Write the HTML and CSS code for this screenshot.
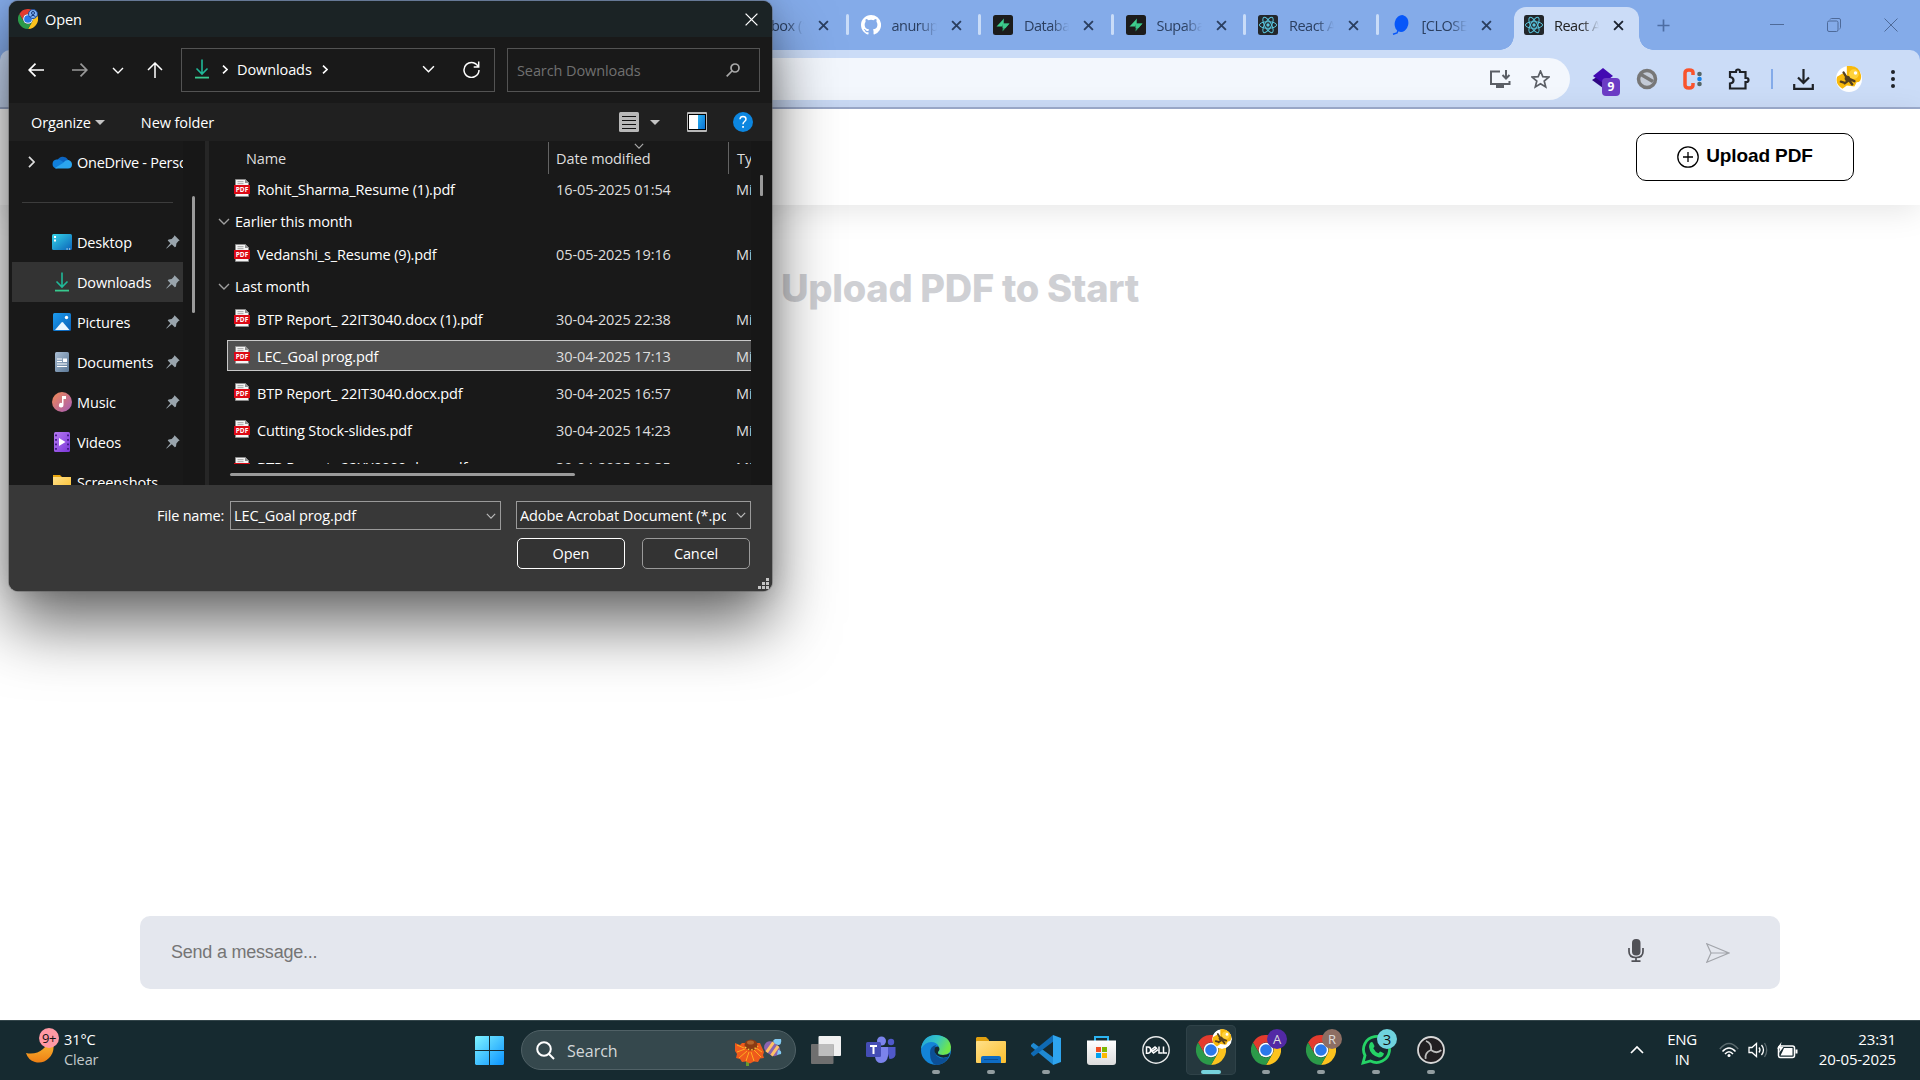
FILE: index.html
```html
<!DOCTYPE html>
<html lang="en">
<head>
<meta charset="utf-8">
<title>React App</title>
<link rel="stylesheet" href="styles.css">
</head>
<body>
<svg class="defs" width="0" height="0" aria-hidden="true">
  <defs>
    <linearGradient id="g-desk" x1="0" y1="0" x2="1" y2="1"><stop offset="0" stop-color="#36d6ea"/><stop offset="1" stop-color="#0b62b8"/></linearGradient>
    <linearGradient id="g-pic" x1="0" y1="0" x2="1" y2="1"><stop offset="0" stop-color="#1c9cf0"/><stop offset="1" stop-color="#0a5fb5"/></linearGradient>
    <linearGradient id="g-doc" x1="0" y1="0" x2="1" y2="1"><stop offset="0" stop-color="#a9bdd3"/><stop offset="1" stop-color="#5b7896"/></linearGradient>
    <linearGradient id="g-mus" x1="0" y1="0" x2="1" y2="1"><stop offset="0" stop-color="#f28a52"/><stop offset="1" stop-color="#a45bb8"/></linearGradient>
    <linearGradient id="g-vid" x1="0" y1="0" x2="1" y2="1"><stop offset="0" stop-color="#b77bf2"/><stop offset="1" stop-color="#7a35d8"/></linearGradient>
    <linearGradient id="g-win" x1="0" y1="0" x2="1" y2="1"><stop offset="0" stop-color="#7ff3ff"/><stop offset="1" stop-color="#0a93ff"/></linearGradient>
    <linearGradient id="g-moon" x1="0" y1="0" x2="0" y2="1"><stop offset="0" stop-color="#fbc53a"/><stop offset="1" stop-color="#ee7f14"/></linearGradient>
    <linearGradient id="g-edge" x1="0" y1="0" x2="1" y2=".4"><stop offset="0" stop-color="#1f9fdc"/><stop offset=".55" stop-color="#35c5c3"/><stop offset="1" stop-color="#6fe64a"/></linearGradient>
    <linearGradient id="g-fold" x1="0" y1="0" x2="1" y2="1"><stop offset="0" stop-color="#ffe08a"/><stop offset="1" stop-color="#fcbf2d"/></linearGradient>
    <linearGradient id="g-store" x1="0" y1="0" x2="0" y2="1"><stop offset="0" stop-color="#fff"/><stop offset="1" stop-color="#dcdcdc"/></linearGradient>
    <linearGradient id="g-pane" x1="0" y1="0" x2="1" y2="1"><stop offset="0" stop-color="#2cb3f2"/><stop offset="1" stop-color="#0a6fd0"/></linearGradient>
    <symbol id="chrome" viewBox="0 0 30 30">
      <path fill="#e33b2e" d="M2 7.5a15 15 0 0 1 26 0H15a7.500 7.500 0 0 0-6.500 11.200z"/>
      <path fill="#fcc31e" d="M28 7.500A15 15 0 0 1 15 30l6.500-11.200A7.500 7.500 0 0 0 15 7.500z"/>
      <path fill="#2b9a49" d="M15 30A15 15 0 0 1 2 7.500l6.500 11.250a7.500 7.500 0 0 0 13 0z"/>
      <circle cx="15" cy="15" r="7.300" fill="#fff"/><circle cx="15" cy="15" r="5.800" fill="#2a78ea"/>
    </symbol>
    <symbol id="bee" viewBox="0 0 24 24">
      <circle cx="12" cy="12" r="12" fill="#fff"/>
      <path fill="#f8b90c" d="M10 0q11-1 13 8 1 7-4 7l-2 4-7-1-4 3Q-1 17 1 10l5-3 4 2z"/>
      <circle cx="16.500" cy="7.500" r="4.500" fill="#ffd23c"/><circle cx="18" cy="6.500" r="1.600" fill="#fff"/>
      <path fill="none" stroke="#54401f" stroke-width="2.200" stroke-linecap="round" d="M7 6l3 5 7 3M8 16l4-3 3 4M4.500 14.500l3.500 1"/><circle cx="10.500" cy="11.500" r="2.500" fill="#54401f"/>
    </symbol>
    <symbol id="close" viewBox="0 0 10 10"><path d="M1 1l8 8M9 1L1 9" fill="none" stroke="currentColor" stroke-width="1.700"/></symbol>
    <symbol id="react" viewBox="0 0 20 20">
      <rect width="20" height="20" rx="2.500" fill="#23272b"/>
      <g fill="none" stroke="#58c4dc" stroke-width="1"><ellipse cx="10" cy="10" rx="8.600" ry="3.300"/><ellipse cx="10" cy="10" rx="8.600" ry="3.300" transform="rotate(60 10 10)"/><ellipse cx="10" cy="10" rx="8.600" ry="3.300" transform="rotate(120 10 10)"/></g>
      <circle cx="10" cy="10" r="1.700" fill="#58c4dc"/>
    </symbol>
    <symbol id="supa" viewBox="0 0 20 20"><rect width="20" height="20" rx="2.500" fill="#1c1c1c"/><path fill="#3ecf8e" d="M11 3.500L3.500 11.500h6z"/><path fill="#2fa872" d="M9.500 16.500L16.500 8.500h-6.500z"/><path fill="#3ecf8e" d="M11 3.500v5h5.500l-4 4.500H9.500v-1.500z" opacity=".8"/></symbol>
    <symbol id="pin" viewBox="0 0 14 14"><path fill="#9aa5ad" d="M8.500.3l5.200 5.200-1.200.6-2.100 2.300-.4 3.100-1.200.7-3-3L.7 13.600l-.5-.3 4.200-5L1.700 5.500l.9-1.100 3.100-.5 2.100-2.200z"/></symbol>
    <symbol id="pdf" viewBox="0 0 16 18">
      <path fill="#f4f4f4" stroke="#8d8d8d" stroke-width=".8" d="M1.500.5h10l3 3v14h-13z"/><path fill="#8d8d8d" d="M11 .5v3.500h3.500z"/>
      <path stroke="#999" stroke-width=".9" d="M3.500 2.700h6M3.500 4.700h6"/><rect y="6" width="16" height="9" fill="#dc0914"/>
      <text x="8" y="13.200" text-anchor="middle" class="pdf-text">PDF</text>
    </symbol>
    <symbol id="down" viewBox="0 0 14 20"><path fill="none" stroke="#20b898" stroke-width="1.600" d="M7 .5v14M1.500 9.500L7 15l5.500-5.500"/><path stroke="#38c98f" stroke-width="1.800" d="M0 18.600h14"/></symbol>
    <symbol id="chev" viewBox="0 0 12 7"><path d="M1 1l5 5 5-5" fill="none" stroke="currentColor" stroke-width="1.400"/></symbol>
    <symbol id="next" viewBox="0 0 6 9"><path d="M1 .7l4 3.800-4 3.800" fill="none" stroke="currentColor" stroke-width="1.600"/></symbol>
  </defs>
</svg>

<div class="browser">
  <div class="tabstrip">
    <div class="tab"><svg class="fav"></svg><span class="tab-title">Inbox (12)</span><svg class="tab-x"><use href="#close"/></svg></div>
    <div class="tab"><svg class="fav" viewBox="0 0 16 16"><path fill="#fff" d="M8 0C3.580 0 0 3.580 0 8c0 3.540 2.290 6.530 5.470 7.590.4.070.55-.17.55-.38v-1.490c-2.010.37-2.530-.49-2.690-.94-.09-.23-.48-.94-.82-1.130-.28-.15-.68-.52-.01-.53.63-.01 1.080.58 1.230.82.72 1.210 1.870.87 2.330.66.070-.52.28-.87.51-1.070-1.780-.2-3.640-.89-3.640-3.950 0-.87.31-1.590.82-2.150-.08-.2-.36-1.020.08-2.120 0 0 .67-.21 2.200.82a7.500 7.500 0 0 1 4 0c1.530-1.040 2.200-.82 2.200-.82.44 1.100.16 1.920.08 2.120.51.56.82 1.270.82 2.150 0 3.070-1.870 3.750-3.650 3.950.29.25.54.73.54 1.480v2.200c0 .21.15.46.55.38A8 8 0 0 0 8 0z"/></svg><span class="tab-title">anurup-b</span><svg class="tab-x"><use href="#close"/></svg></div>
    <div class="tab"><svg class="fav"><use href="#supa"/></svg><span class="tab-title">Database</span><svg class="tab-x"><use href="#close"/></svg></div>
    <div class="tab"><svg class="fav"><use href="#supa"/></svg><span class="tab-title">Supabase</span><svg class="tab-x"><use href="#close"/></svg></div>
    <div class="tab"><svg class="fav"><use href="#react"/></svg><span class="tab-title">React App</span><svg class="tab-x"><use href="#close"/></svg></div>
    <div class="tab no-sep"><svg class="fav" viewBox="0 0 20 20"><ellipse cx="10.500" cy="8.500" rx="6.800" ry="8.500" fill="#0757f9" transform="rotate(12 10.500 8.500)"/><path fill="none" stroke="#0757f9" stroke-width="1.500" d="M7 15.500l-1 2.500-4 1.200"/></svg><span class="tab-title">[CLOSED]</span><svg class="tab-x"><use href="#close"/></svg></div>
    <div class="tab active"><svg class="fav"><use href="#react"/></svg><span class="tab-title">React App</span><svg class="tab-x"><use href="#close"/></svg></div>
    <svg class="newtab" viewBox="0 0 14 14"><path d="M7 .5v13M.5 7h13" stroke="#4d6da3" stroke-width="1.800"/></svg>
    <div class="winctl">
      <svg width="14" height="14" viewBox="0 0 14 14"><path d="M0 6.500h14" stroke="#4e6a99" /></svg>
      <svg width="14" height="14" viewBox="0 0 14 14" fill="none" stroke="#4e6a99"><rect x=".5" y="3" width="10.500" height="10.500" rx="1.500"/><path d="M3 1.500q.5-1 1.500-1H12q1.500 0 1.500 1.500v7.500q0 1-1 1.500"/></svg>
      <svg width="14" height="14" viewBox="0 0 14 14"><path d="M.5.500l13 13M13.500.500l-13 13" stroke="#4e6a99"/></svg>
    </div>
  </div>
  <div class="toolbar">
    <div class="omnibox">
      <svg width="21" height="18" viewBox="0 0 21 18" fill="none" stroke="#5b5f66" stroke-width="2"><path d="M10 1.500H1v12.500h18.500v-3M16 0v8M12.500 5l3.500 3.500L19.500 5"/><path d="M6 16.500h8" stroke-width="3"/></svg>
      <svg width="19" height="19" viewBox="0 0 19 19"><path d="M9.500 1l2.300 5.600 6 .5-4.600 3.900 1.500 5.900-5.200-3.200-5.200 3.200L5.800 11 1.200 7.100l6-.5z" fill="none" stroke="#5b5f66" stroke-width="1.700"/></svg>
    </div>
    <div class="extensions">
      <div class="ext-badge"><svg width="22" height="22" viewBox="0 0 22 22"><path d="M0 12l11-7 11 7-11 8z" fill="#2e0783"/><path d="M11 0l10 8-10 7L1 8z" fill="#4209b2"/></svg><span class="count">9</span></div>
      <svg width="22" height="22" viewBox="0 0 22 22"><circle cx="11" cy="11" r="8.500" fill="#c3cad6" stroke="#777" stroke-width="3.500"/><path d="M5 6.500l12 7" stroke="#777" stroke-width="3.500"/></svg>
      <svg width="20" height="22" viewBox="0 0 20 22"><path d="M10 7V4.500Q10 2 6 2T2 5v12q0 3 4 3t4-3v-2" fill="none" stroke="#f9532c" stroke-width="3.500"/><circle cx="16.500" cy="6" r="2.300" fill="#566"/><circle cx="16.500" cy="11" r="2.300" fill="#1683ea"/><circle cx="16.500" cy="16" r="2.300" fill="#566"/></svg>
      <svg width="22" height="22" viewBox="0 0 22 22"><path d="M2 4h6V3.500a2 2 0 0 1 4 0V4h5.500v6h1a2 2 0 0 1 0 4h-1v6.500H2v-5q3.500-.5 3.500-3.200T2 9z" fill="none" stroke="#1f2227" stroke-width="2.200"/></svg>
      <i class="divider"></i>
      <svg width="21" height="21" viewBox="0 0 21 21" fill="none" stroke="#1f2227" stroke-width="2.200"><path d="M10.500 0v13.500M5 8.500l5.500 5.500L16 8.500M1.200 15v4.800h18.600V15"/></svg>
      <svg width="26" height="26"><use href="#bee"/></svg>
      <svg width="4" height="20" viewBox="0 0 4 20" fill="#1f2227"><circle cx="2" cy="3" r="2"/><circle cx="2" cy="10" r="2"/><circle cx="2" cy="17" r="2"/></svg>
    </div>
  </div>
  <div class="page">
    <header class="page-head">
      <button class="upload"><svg width="22" height="22" viewBox="0 0 22 22" fill="none" stroke="#000" stroke-width="1.300"><circle cx="11" cy="11" r="10.200"/><path d="M11 6v10M6 11h10"/></svg><span>Upload PDF</span></button>
    </header>
    <h1 class="hero">Upload PDF to Start</h1>
    <div class="composer">
      <span class="placeholder">Send a message...</span>
      <svg width="18" height="24" viewBox="0 0 18 24"><rect x="5" y="0" width="8.500" height="16.500" rx="4" fill="#505157"/><path d="M2 9v3.500q0 6 7 6t7-6V9M9 18v4M4.500 22.200h9" fill="none" stroke="#505157" stroke-width="1.700"/></svg>
      <svg width="24" height="20" viewBox="0 0 24 20" fill="none" stroke="#a2a5ab" stroke-width="1.200"><path d="M.8.800L23 10 .8 19.200 5 10zM5 10h18"/></svg>
    </div>
  </div>
</div>

<section class="dialog">
  <div class="d-title">
    <div class="d-logo"><svg width="20" height="20"><use href="#chrome"/></svg><svg class="d-ava" width="10" height="10" viewBox="0 0 10 10"><circle cx="5" cy="5" r="4.500" fill="#7fb0f3" stroke="#1d4a96"/><circle cx="5" cy="4" r="1.500" fill="none" stroke="#14377a"/><path d="M2.500 7.500q2.500-2.500 5 0" fill="none" stroke="#14377a"/></svg></div>
    <span>Open</span>
    <svg class="d-close" width="13" height="13" viewBox="0 0 13 13"><path d="M.6.600l11.800 11.800M12.400.600L.6 12.400" stroke="#fff" stroke-width="1.300"/></svg>
  </div>
  <div class="d-nav">
    <svg width="16" height="14" viewBox="0 0 16 14" fill="none" stroke="#fff" stroke-width="1.700"><path d="M16 7H1M7.500 .7L1.200 7l6.300 6.300"/></svg>
    <svg width="16" height="14" viewBox="0 0 16 14" fill="none" stroke="#999" stroke-width="1.700"><path d="M0 7h15M8.500 .7L14.800 7l-6.300 6.300"/></svg>
    <svg class="w" width="12" height="7"><use href="#chev"/></svg>
    <svg width="16" height="16" viewBox="0 0 16 16" fill="none" stroke="#fff" stroke-width="1.500"><path d="M8 16V1M1 8l7-7 7 7"/></svg>
    <div class="address">
      <svg width="14" height="20"><use href="#down"/></svg><svg class="w c1" width="6" height="9"><use href="#next"/></svg><span>Downloads</span><svg class="w c2" width="6" height="9"><use href="#next"/></svg>
      <svg class="w drop" width="13" height="8"><use href="#chev"/></svg>
      <svg width="17" height="17" viewBox="0 0 17 17" fill="none" stroke="#fff" stroke-width="1.500"><path d="M15.600 6.500A7.500 7.500 0 1 0 16 9M15.700 .5v5.500h-5"/></svg>
    </div>
    <div class="d-search"><span>Search Downloads</span><svg width="14" height="14" viewBox="0 0 14 14" fill="none" stroke="#a8a8a8" stroke-width="1.700"><circle cx="9" cy="5" r="4"/><path d="M6 8L.7 13.300"/></svg></div>
  </div>
  <div class="d-tools">
    <span class="organize">Organize</span><i class="tri t1"></i><span class="newfolder">New folder</span>
    <svg class="ic-list" width="20" height="20" viewBox="0 0 20 20"><rect width="20" height="20" rx="1.500" fill="#b8b8b8"/><path d="M3 4.500h14M3 8.500h14M3 12.500h14M3 16.500h14" stroke="#111"/></svg>
    <i class="tri t2"></i>
    <svg class="ic-pane" width="20" height="20" viewBox="0 0 20 20"><rect width="20" height="20" rx="1" fill="#b8b8b8"/><rect x="1" y="2" width="18" height="16" fill="#000"/><rect x="2" y="3" width="9" height="14" fill="#fff"/><rect x="11" y="3" width="7" height="14" fill="url(#g-pane)"/></svg>
    <svg class="ic-help" width="20" height="20" viewBox="0 0 20 20"><circle cx="10" cy="10" r="10" fill="#0c86e0"/><path d="M7 7.200Q7.200 4.500 10 4.500t3 2.500q0 1.500-1.500 2.500T10 12.300" fill="none" stroke="#fff" stroke-width="1.500"/><rect x="9.200" y="14" width="1.700" height="1.800" fill="#fff"/></svg>
  </div>
  <div class="d-body">
    <nav class="side">
      <div class="s-row one"><svg class="w s-arrow" width="7" height="12" viewBox="0 0 7 12"><path d="M1 .8L6 6l-5 5.200" fill="none" stroke="#ddd" stroke-width="1.700"/></svg><svg class="s-ic" viewBox="0 0 20 20"><path fill="#0c65c2" d="M5.500 8A6 6 0 0 1 16 7.500l-4 6z"/><path fill="#1080dc" d="M4.500 7.500Q7 7 9 8.500l7 5-12 3a4.600 4.600 0 0 1 .5-9z"/><path fill="#2ba5ee" d="M3 16l8-5q2.500-3.500 5.500-3 3.500 1 3.500 4.500 0 4-4 4H5q-1.500 0-2-.5z"/></svg><span>OneDrive - Personal</span></div>
      <hr>
      <div class="s-row"><svg class="s-ic" viewBox="0 0 20 20"><rect y="2" width="20" height="16" rx="1.500" fill="url(#g-desk)"/><path fill="#fff" d="M2 4h2v2H2zM2 7.500h2v2H2zM14.500 16.500h1.200v1h-1.200zM17 16.500h1.200v1H17z"/></svg><span>Desktop</span><svg class="s-pin"><use href="#pin"/></svg></div>
      <div class="s-row sel"><svg class="s-ic"><use href="#down"/></svg><span>Downloads</span><svg class="s-pin"><use href="#pin"/></svg></div>
      <div class="s-row"><svg class="s-ic" viewBox="0 0 20 20"><rect x="1" y="1" width="18" height="18" rx="1.500" fill="url(#g-pic)"/><path fill="#eaf6ff" d="M3 18l6.500-7.500q.8-.8 1.600 0L17.500 18z"/><circle cx="14.500" cy="5.500" r="1.700" fill="#fff"/></svg><span>Pictures</span><svg class="s-pin"><use href="#pin"/></svg></div>
      <div class="s-row"><svg class="s-ic" viewBox="0 0 20 20"><rect x="3" width="14" height="20" rx="1.500" fill="url(#g-doc)"/><path stroke="#fff" stroke-width="1.200" d="M5 7h5M5 9.500h5M5 12h10M5 14.500h10"/><rect x="11" y="6.500" width="4" height="3.500" fill="#fff"/></svg><span>Documents</span><svg class="s-pin"><use href="#pin"/></svg></div>
      <div class="s-row"><svg class="s-ic" viewBox="0 0 20 20"><circle cx="10" cy="10" r="10" fill="url(#g-mus)"/><path fill="#fff" d="M10 4h4v3h-2.500v6a2.300 2.300 0 1 1-1.500-2z"/></svg><span>Music</span><svg class="s-pin"><use href="#pin"/></svg></div>
      <div class="s-row"><svg class="s-ic" viewBox="0 0 20 20"><rect x="2" width="16" height="20" rx="1.500" fill="url(#g-vid)"/><path stroke="#3d1583" stroke-width="1.800" stroke-dasharray="1.800 2.700" d="M4 2.500v16M16 2.500v16"/><path fill="#fff" d="M7 6l6.500 4L7 14z"/></svg><span>Videos</span><svg class="s-pin"><use href="#pin"/></svg></div>
      <div class="s-row"><svg class="s-ic" viewBox="0 0 20 20"><path fill="#e9a50e" d="M1 3h7l2 2v5H1z"/><rect x="1" y="5" width="18" height="14" fill="url(#g-fold)"/></svg><span>Screenshots</span></div>
    </nav>
    <div class="side-scroll"><i></i></div>
    <div class="files">
      <div class="f-head"><span class="c-name">Name</span><span class="c-date">Date modified<svg class="sort" width="10" height="6"><use href="#chev"/></svg></span><span class="c-type">Ty</span></div>
      <div class="f-list">
        <div class="f-row"><svg class="pdf"><use href="#pdf"/></svg><b>Rohit_Sharma_Resume (1).pdf</b><span>16-05-2025 01:54</span><em>Mi</em></div>
        <div class="f-group"><svg width="12" height="7"><use href="#chev"/></svg>Earlier this month</div>
        <div class="f-row"><svg class="pdf"><use href="#pdf"/></svg><b>Vedanshi_s_Resume (9).pdf</b><span>05-05-2025 19:16</span><em>Mi</em></div>
        <div class="f-group"><svg width="12" height="7"><use href="#chev"/></svg>Last month</div>
        <div class="f-row"><svg class="pdf"><use href="#pdf"/></svg><b>BTP Report_ 22IT3040.docx (1).pdf</b><span>30-04-2025 22:38</span><em>Mi</em></div>
        <div class="f-row picked"><svg class="pdf"><use href="#pdf"/></svg><b>LEC_Goal prog.pdf</b><span>30-04-2025 17:13</span><em>Mi</em></div>
        <div class="f-row"><svg class="pdf"><use href="#pdf"/></svg><b>BTP Report_ 22IT3040.docx.pdf</b><span>30-04-2025 16:57</span><em>Mi</em></div>
        <div class="f-row"><svg class="pdf"><use href="#pdf"/></svg><b>Cutting Stock-slides.pdf</b><span>30-04-2025 14:23</span><em>Mi</em></div>
        <div class="f-row"><svg class="pdf"><use href="#pdf"/></svg><b>BTP Report_ 22XX0000.docx.pdf</b><span>30-04-2025 08:35</span><em>Mi</em></div>
      </div>
      <div class="h-scroll"><i></i></div>
    </div>
    <div class="v-scroll"><i></i></div>
  </div>
  <div class="d-foot">
    <div class="foot-row">
      <label>File name:</label>
      <div class="combo fname"><span>LEC_Goal prog.pdf</span><svg width="10" height="6"><use href="#chev"/></svg></div>
      <div class="combo ftype"><span>Adobe Acrobat Document (*.pdf)</span><svg width="10" height="6"><use href="#chev"/></svg></div>
    </div>
    <div class="foot-btns"><div class="btn primary">Open</div><div class="btn">Cancel</div></div>
    <svg class="grip" width="11" height="11" viewBox="0 0 11 11" fill="#c4c4c4"><path d="M8 0h3v3H8zM4 4h3v3H4zM8 4h3v3H8zM0 8h3v3H0zM4 8h3v3H4zM8 8h3v3H8z"/></svg>
  </div>
</section>

<footer class="taskbar">
  <div class="weather">
    <div class="moon"><svg width="28" height="28" viewBox="0 0 28 28"><path fill="url(#g-moon)" d="M25 2Q31 15 23 23q-6 6-14 4-7-2-9-9 10 2 17-4 6-5 8-12z"/></svg><span>9+</span></div>
    <div class="w-text"><span>31°C</span><span class="dim">Clear</span></div>
  </div>
  <div class="apps">
    <div class="app"><svg width="29" height="29" viewBox="0 0 29 29"><path fill="url(#g-win)" d="M1 0h13v14H0V1zM15 0h13l1 1v13H15zM0 15h14v14H1l-1-1zM15 15h14v13l-1 1H15z"/></svg></div>
    <div class="t-search"><svg width="19" height="19" viewBox="0 0 19 19" fill="none" stroke="#fff" stroke-width="2"><circle cx="8" cy="8" r="6.800"/><path d="M13 13l5 5"/></svg><span>Search</span>
      <svg class="flower" width="48" height="28" viewBox="0 0 48 28"><path d="M13.500 20v7" stroke="#6a9a2c" stroke-width="3"/><path fill="#ee5a1c" d="M1 4l5 2 2-2h18l4 9-1 3 1 3-4 .5-2 3.500-4-.5-4 2-4-2-4 .5-2-3-4-1 1-4-2-3z"/><path stroke="#ffac1f" stroke-width="1" fill="none" d="M3 6l7 3M3 13l8-3M5 19l8-7M12 22l3-9M20 22l-3-9M27 18l-7-7M28 13l-6-4"/><ellipse cx="17" cy="6" rx="6.500" ry="5.500" fill="#8a3b14"/><ellipse cx="16.500" cy="3.500" rx="3.500" ry="2" fill="#b5652c"/><path stroke="#f6c53c" stroke-width="1.500" stroke-dasharray="1.500 2" fill="none" d="M11 8q6 6 13-1"/><g transform="rotate(35 38 9)"><rect x="30" y="3.500" width="17" height="12" rx="6" fill="#8b64b0"/><path stroke="#ffc267" stroke-width="3" d="M36 3.500v12M42 4v11.500"/></g><path fill="#84cbf3" d="M39 2q3-4 8-2 1 5-2 6-4 0-6-4zM44 11q4 0 3 4l-4 1z"/></svg></div>
    <div class="app"><svg width="30" height="28" viewBox="0 0 30 28"><rect x="7.500" width="22.500" height="20" rx="1" fill="#f1f1f1"/><rect y="8" width="22.500" height="20" rx="1" fill="#6f6f6f"/><rect x="7.500" y="8" width="15" height="12" fill="#bdbdbd"/></svg></div>
    <div class="app"><svg width="30" height="28" viewBox="0 0 30 28"><circle cx="15.500" cy="5" r="4.500" fill="#7b83eb"/><circle cx="25" cy="6" r="3.200" fill="#5059c9"/><path fill="#5059c9" d="M20 11h9.500v8q-1 4-6 4z"/><path fill="#7b83eb" d="M9 11h13v9q-1 7-7 7-5 0-6-6z"/><rect y="6" width="15" height="15" rx="1.500" fill="#444db5"/><path stroke="#fff" stroke-width="2" d="M4 10h7M7.500 10v8"/></svg></div>
    <div class="app run"><svg width="30" height="30" viewBox="0 0 30 30"><circle cx="15" cy="15" r="15" fill="#1384d8"/><path fill="#0c4f96" d="M9 18q0-7 6-8-4 9 4 13 5 1 9-2-4 9-13 9-6-2-6-12z"/><path fill="url(#g-edge)" d="M0 14Q2 0 15 0q14 1 15 12 0 8-8 8-6 0-5-3 2-2 1-5-2-5-8-5-6 0-10 7z"/><path fill="#16292f" d="M14 12.500q3-2 4.300.5.700 2.500-1.300 4-1 3 5 3 4 0 7-2l-1.500 3.500Q22 24 17 21q-5-3-3-8.500z"/></svg></div>
    <div class="app run"><svg width="30" height="28" viewBox="0 0 30 28"><path fill="#e0a010" d="M0 2l1-1h9l3 3v6H0z"/><rect y="5" width="30" height="22" rx="1" fill="url(#g-fold)"/><path fill="#0e6cc4" d="M5 27v-5q0-2 2-2h16q2 0 2 2v5z"/><path stroke="#0a4f98" d="M8 23.500h14"/></svg></div>
    <div class="app run"><svg width="30" height="30" viewBox="0 0 30 30"><path fill="#1f8ad2" d="M0 10l2.500-2.200L23 23l-1 6.800L0 11.500z"/><path fill="#0f6ab4" d="M0 19l2.500 2.500L23 6l-1-6L0 18z"/><path fill="#2ea4ee" d="M22 0l8 3v24l-8 3z"/></svg></div>
    <div class="app"><svg width="29" height="29" viewBox="0 0 29 29"><path fill="none" stroke="#2cb5f2" stroke-width="2" d="M8 6V1h13v5"/><path fill="url(#g-store)" d="M0 4.500h29V26q0 3-3 3H3q-3 0-3-3z"/><path fill="#f04f23" d="M9 11h5v5H9z"/><path fill="#7db700" d="M15 11h5v5h-5z"/><path fill="#00a1ee" d="M9 17h5v5H9z"/><path fill="#fcb900" d="M15 17h5v5h-5z"/></svg></div>
    <div class="app"><svg width="28" height="28" viewBox="0 0 28 28"><circle cx="14" cy="14" r="13.200" fill="#172a30" stroke="#e8eaea" stroke-width="1.400"/><path fill="none" stroke="#fff" stroke-width="1.500" d="M4.500 11v6.300h1.700q2.500-.2 2.500-3.200T6.200 11zM9 14l4-3 1.500 1.200-4 3zM10 15.500l1.500 1.500 4.500-3.300M17 10.500v6.500h3.500M21.500 10.500v6.500H25"/></svg></div>
    <div class="app current"><svg width="30" height="30"><use href="#chrome"/></svg><svg class="ava" width="20" height="20"><use href="#bee"/></svg></div>
    <div class="app run"><svg width="30" height="30"><use href="#chrome"/></svg><span class="ava a">A</span></div>
    <div class="app run"><svg width="30" height="30"><use href="#chrome"/></svg><span class="ava r">R</span></div>
    <div class="app run"><svg width="30" height="30" viewBox="0 0 30 30"><path fill="none" stroke="#25d366" stroke-width="2.800" d="M2 28l2-7.500A13 13 0 1 1 9.500 26z"/><path fill="#25d366" d="M9 8q2-2 3 0l1.500 3q0 1-1.200 2.300 2 4 5.200 5l1.500-1.800q1 0 4 2-1 4-5 4Q9 20 8 12q0-2 1-4z"/></svg><span class="ava w3">3</span></div>
    <div class="app run"><svg width="28" height="28" viewBox="0 0 28 28"><circle cx="14" cy="14" r="13" fill="#211e21" stroke="#d7d7d7" stroke-width="1.800"/><g fill="none" stroke="#bdbdbd" stroke-width="1.800"><path d="M14 14q1-7-5-9"/><path d="M14 14q1-7-5-9" transform="rotate(120 14 14)"/><path d="M14 14q1-7-5-9" transform="rotate(240 14 14)"/></g></svg></div>
  </div>
  <div class="tray">
    <svg class="tray-up" width="14" height="9" viewBox="0 0 14 9"><path d="M1 8l6-6 6 6" fill="none" stroke="#fff" stroke-width="1.700"/></svg>
    <div class="lang"><span>ENG</span><span>IN</span></div>
    <svg width="20" height="16" viewBox="0 0 20 16" fill="none" stroke="#fff" stroke-width="1.500"><path d="M.8 7Q10-4 19.200 7" stroke="#5a696d"/><path d="M3.500 9.500q6.500-7 13 0M6 12q4-4.500 8 0"/><circle cx="10" cy="13.500" r="1.500" fill="#fff" stroke="none"/></svg>
    <svg width="20" height="16" viewBox="0 0 20 16" fill="none" stroke="#fff" stroke-width="1.300"><path d="M1 5.500h3L8.500 1.500v13L4 10.500H1zM11 5.500q2 2.500 0 5M13.500 3q4 5 0 10"/><path d="M16.500 1q4.500 7 0 14" stroke="#5a696d"/></svg>
    <svg width="21" height="17" viewBox="0 0 21 17"><rect x="1.500" y="4" width="16" height="11.500" rx="2" fill="none" stroke="#fff" stroke-width="1.500"/><path fill="#fff" d="M7 6h8.500v7.500h-12l2-4zM18.500 7.500h2v4h-2zM4.500 0L0 6.500h3L2 11l4.500-6h-3z"/></svg>
    <div class="clock"><span>23:31</span><span>20-05-2025</span></div>
  </div>
</footer>
</body>
</html>
```
FILE: styles.css
```css
* { box-sizing: border-box; }
html, body { margin: 0; height: 100%; }
body {
  width: 1920px; height: 1080px; overflow: hidden; display: flex; flex-direction: column;
  font-family: "Open Sans", "Noto Sans", sans-serif; font-size: 14px; background: #fff;
}
svg { display: block; flex: none; }
.defs { position: absolute; }
.w { color: #fff; }

/* browser window */
.browser { flex: 1; display: flex; flex-direction: column; min-height: 0; background: #84abe9; }
.tabstrip { height: 50px; background: #84abe9; display: flex; align-items: center; padding-left: 715px; position: relative; }
.tab { width: 132.500px; height: 50px; display: flex; align-items: center; padding-left: 13px; position: relative; color: #2b3f60; font-size: 14.500px; }
.tab::after { content: ""; position: absolute; right: -1px; top: 14px; width: 3px; height: 21px; border-radius: 2px; background: #c9dcf8; }
.tab.no-sep::after { display: none; }
.fav { width: 20px; height: 20px; }
.tab-title { width: 46px; margin-left: 11px; overflow: hidden; white-space: nowrap; letter-spacing: -.5px; -webkit-mask-image: linear-gradient(90deg, #000 60%, transparent 98%); }
.tab-x { width: 11px; height: 11px; margin-left: 13px; color: #2b3f60; }
.tab.active { width: 124.500px; margin-left: 4px; padding-left: 10px; height: 43px; margin-top: 7px; padding-bottom: 7px; background: #cbdcf7; border-radius: 12px 12px 0 0; color: #222; }
.tab.active .tab-title { margin-left: 10px; }
.tab.active::before, .tab.active::after { content: ""; position: absolute; top: auto; right: auto; bottom: 0; width: 14px; height: 14px; border-radius: 0; }
.tab.active::before { left: -14px; background: radial-gradient(circle at 0 0, transparent 13.500px, #cbdcf7 14px); }
.tab.active::after { left: 100%; background: radial-gradient(circle at 100% 0, transparent 13.500px, #cbdcf7 14px); }
.tab.active .tab-x { color: #1d2430; }
.newtab { width: 13px; height: 13px; margin-left: 18px; }
.winctl { margin-left: auto; display: flex; gap: 43px; padding-right: 22px; }
.toolbar { height: 59px; background: #cbdcf7; border-bottom: 2px solid #9daccd; border-radius: 10px 10px 0 0; display: flex; align-items: center; }
.omnibox { width: 1532px; height: 42px; margin-left: 38px; margin-top: 1px; border-radius: 21px; background: #f3f7fd; display: flex; align-items: center; justify-content: flex-end; gap: 20px; padding-right: 20px; }
.extensions { display: flex; align-items: center; flex: 1; padding-left: 22px; margin-top: 1px; }
.ext-badge { position: relative; width: 28px; margin-right: 16px; margin-top: -1px; }
.count { position: absolute; left: 10px; top: 10px; width: 18px; height: 18px; border-radius: 4px; background: #6b3cc4; color: #fff; font-weight: 700; font-size: 12px; line-height: 18px; text-align: center; }
.extensions > svg:nth-child(3) { margin-left: 25px; }
.extensions > svg:nth-child(4) { margin-left: 25px; }
.divider { width: 2px; height: 20px; background: #84abe9; margin: 0 20px 0 21px; }
.extensions > svg:nth-child(7) { margin-left: 22px; }
.extensions > svg:nth-child(8) { margin-left: 29px; }

/* page */
.page { flex: 1; display: flex; flex-direction: column; background: #fff; }
.page-head { height: 96px; display: flex; justify-content: flex-end; align-items: center; padding-right: 66px; box-shadow: 0 6px 30px rgba(0,0,0,.1); }
.upload { width: 218px; height: 48px; border: 1.500px solid #000; border-radius: 10px; background: #fff; padding: 0 0 2px; display: flex; align-items: center; justify-content: center; gap: 7px; font: 700 19px "Liberation Sans", Arial, sans-serif; letter-spacing: -.1px; color: #000; }
.upload svg { position: relative; top: 1px; }
.hero { margin: 59px 0 0; text-align: center; font: 800 38px/48px Inter, sans-serif; color: #cfd0d4; letter-spacing: -.3px; }
.composer { margin: auto 140px 31px; height: 73px; border-radius: 10px; background: #e4e7ee; display: flex; align-items: center; padding: 0 50px 0 31px; font: 18px "Liberation Sans", Arial, sans-serif; letter-spacing: -.22px; color: #757575; }
.placeholder { flex: 1; }
.composer svg:nth-child(2) { margin-right: 61px; margin-top: -3px; }

/* file dialog, floating over the browser */
.dialog { position: absolute; left: 9px; top: 1px; width: 763px; height: 590px; border-radius: 9px; background: #191919; color: #fff; display: flex; flex-direction: column; box-shadow: 0 0 0 1px rgba(90,90,90,.45), 0 0 24px rgba(0,0,0,.15), 0 34px 64px rgba(0,0,0,.58); font-size: 14.500px; letter-spacing: -.1px; white-space: nowrap; clip-path: inset(-1px -100px -150px -9px); }
.d-title { height: 36px; background: #1b2325; border-radius: 9px 9px 0 0; display: flex; align-items: center; padding: 0 14px 0 9px; gap: 7px; }
.d-logo { position: relative; }
.d-ava { position: absolute; right: 0; top: 0; }
.d-close { margin-left: auto; }
.d-nav { height: 66px; display: flex; align-items: center; padding: 0 0 0 19px; }
.d-nav > svg:nth-child(2) { margin-left: 28px; }
.d-nav > svg:nth-child(3) { margin-left: 24px; }
.d-nav > svg:nth-child(4) { margin-left: 23px; }
.address { margin-left: 18px; width: 314px; height: 44px; border: 1px solid #535353; display: flex; align-items: center; padding: 0 14px 2px 13px; }
.c1 { margin: 0 9px 0 13px; }
.c2 { margin-left: 10px; }
.drop { margin-left: auto; margin-right: 28px; }
.d-search { margin-left: 12px; width: 253px; height: 44px; border: 1px solid #535353; display: flex; align-items: center; justify-content: space-between; padding: 0 19px 0 9px; color: #707070; }
.d-tools { height: 38px; background: #202020; display: flex; align-items: center; padding: 0 19px 0 22px; }
.tri { border: 5px solid transparent; border-top-color: #c4c4c4; border-bottom: 0; }
.t1 { margin: 0 36px 0 4px; }
.ic-list { margin-left: auto; }
.t2 { margin: 0 27px 0 11px; }
.ic-help { margin-left: 26px; }
.d-body { height: 344px; display: flex; overflow: hidden; }
.side { width: 171px; margin-left: 3px; overflow: hidden; }
.s-row { height: 40px; display: flex; align-items: center; padding-left: 40px; position: relative; }
.s-row span { margin-left: 5px; flex: 1; overflow: hidden; letter-spacing: -.15px; }
.s-ic { width: 20px; height: 20px; }
.s-pin { width: 14px; height: 14px; margin-right: 3px; }
.s-row.one { padding-left: 16px; margin-top: 1px; }
.s-row.one span { letter-spacing: -.25px; }
.s-arrow { margin-right: 17px; }
.s-row.sel { background: #333; }
.side hr { margin: 20px 10px 19px; border: 0; border-top: 1px solid #3c3c3c; }
.side-scroll { width: 22px; padding: 55px 0 0 9px; background: #171717; }
.side-scroll i { display: block; width: 3px; height: 117px; background: #9a9a9a; border-radius: 2px; }
.files { width: 546px; border-left: 4px solid #262626; display: flex; flex-direction: column; overflow: hidden; }
.f-head { height: 32px; display: flex; align-items: center; color: #dedede; flex: none; }
.c-name { width: 339px; padding: 2px 0 0 37px; }
.c-date, .c-type { height: 32px; border-left: 1px solid #636363; padding: 7px 0 0 7px; line-height: 20px; position: relative; margin-top: 1px; }
.c-date { width: 180px; }
.sort { position: absolute; left: 85px; top: 1px; color: #aaa; }
.c-type { flex: 1; overflow: hidden; padding-left: 8px; }
.f-list { height: 291px; overflow: hidden; }
.f-list > :first-child { margin-top: -2px; }
.f-row { height: 37px; display: flex; align-items: center; padding: 0 0 0 25px; }
.f-row > * { flex: none; }
.f-row b { font-weight: 400; width: 299px; margin-left: 7px; letter-spacing: -.15px; }
.f-row span { width: 180px; color: #dedede; }
.f-row em { font-style: normal; color: #dedede; }
.f-row.picked { height: 31px; margin: 2px 0 4px 18px; padding: 2px 0 0 6px; border: 1px solid #c8c8c8; border-right: 0; background: #505050; }
.f-group { height: 28px; display: flex; align-items: center; padding: 0 0 2px 9px; gap: 5px; letter-spacing: -.2px; }
.f-group svg { color: #a0a0a0; }
.pdf { width: 16px; height: 18px; margin-top: -3px; }
.pdf-text { font: 700 6.500px "Open Sans", sans-serif; fill: #fff; letter-spacing: 0; }
.h-scroll { flex: 1; padding: 9px 0 0 21px; }
.h-scroll i { display: block; width: 345px; height: 3px; border-radius: 2px; background: #9a9a9a; }
.v-scroll { flex: 1; background: #171717; padding: 34px 0 0 9px; }
.v-scroll i { display: block; width: 3px; height: 21px; background: #9a9a9a; border-radius: 1px; }
.d-foot { flex: 1; background: #383838; border-radius: 0 0 9px 9px; padding-top: 16px; position: relative; }
.foot-row { display: flex; height: 29px; align-items: flex-start; line-height: 27px; }
.foot-row label { width: 215px; text-align: right; margin-right: 6px; padding-top: 1px; letter-spacing: -.2px; }
.combo { height: 29px; border: 1px solid #9a9a9a; background: #333; display: flex; align-items: center; padding: 0 4px 0 3px; }
.combo span { flex: 1; overflow: hidden; }
.combo svg { margin-left: 10px; color: #bbb; }
.fname { width: 271px; background: #383838; }
.ftype { width: 235px; margin-left: 15px; height: 28px; }
.foot-btns { display: flex; gap: 17px; padding: 8px 0 0 508px; }
.btn { width: 108px; height: 31px; border: 1px solid #9a9a9a; border-radius: 5px; background: #333; line-height: 30px; text-align: center; }
.btn.primary { border-color: #fff; }
.grip { position: absolute; right: 3px; bottom: 2px; }

/* taskbar */
.taskbar { height: 60px; background: #162a30; border-top: 1px solid #33454a; display: flex; color: #fff; }
.weather { width: 464px; display: flex; padding-left: 26px; }
.moon { position: relative; width: 28px; margin-top: 14px; }
.moon span { position: absolute; left: 13px; top: -7px; width: 20px; height: 20px; border-radius: 50%; background: #ff99a4; color: #111; font-size: 13px; line-height: 20px; text-align: center; letter-spacing: -.5px; }
.w-text { display: flex; flex-direction: column; padding: 9px 0 0 10px; line-height: 20px; font-size: 14.500px; letter-spacing: -.1px; }
.dim { color: #c2c9cb; }
.apps { display: flex; align-items: center; gap: 5px; padding-bottom: 1px; }
.app { width: 50px; height: 50px; display: flex; align-items: center; justify-content: center; position: relative; border-radius: 5px; }
.app.run::after, .app.current::after { content: ""; position: absolute; bottom: 1px; left: 21px; width: 8px; height: 4px; border-radius: 2px; background: #929da0; }
.app.current { background: #25383e; box-shadow: inset 0 0 0 1px #2f4248; }
.app.current::after { left: 15px; width: 20px; background: #76d3dc; }
.ava { position: absolute; left: 26px; top: 4px; width: 20px; height: 20px; border-radius: 50%; text-align: center; line-height: 20px; font-size: 13px; }
.a { background: #5229a5; color: #ddd; }
.r { background: #8d6e63; color: #ddd; }
.w3 { background: #6fd3de; color: #111; font-size: 15px; }
.t-search { width: 275px; height: 40px; border-radius: 20px; background: #35484d; border: 1px solid #506166; display: flex; align-items: center; padding: 1px 13px 0 14px; margin-left: 2px; font-size: 16px; color: #d3d8da; letter-spacing: 0; }
.t-search span { flex: 1; margin-left: 12px; }
.flower { position: relative; top: 2px; }
.tray { margin-left: auto; display: flex; align-items: center; padding: 0 24px 3px 0; font-size: 15px; line-height: 20px; letter-spacing: -.1px; }
.tray-up { margin-right: -1px; }
.lang, .clock { display: flex; flex-direction: column; }
.lang { width: 42px; align-items: center; margin: 0 16px 0 18px; letter-spacing: -.4px; }
.tray > svg:nth-child(4) { margin: 0 9px; }
.tray > svg:nth-child(4), .tray > svg:nth-child(3), .tray > svg:nth-child(5) { margin-top: 2px; }
.clock { width: 98px; align-items: flex-end; }
```
